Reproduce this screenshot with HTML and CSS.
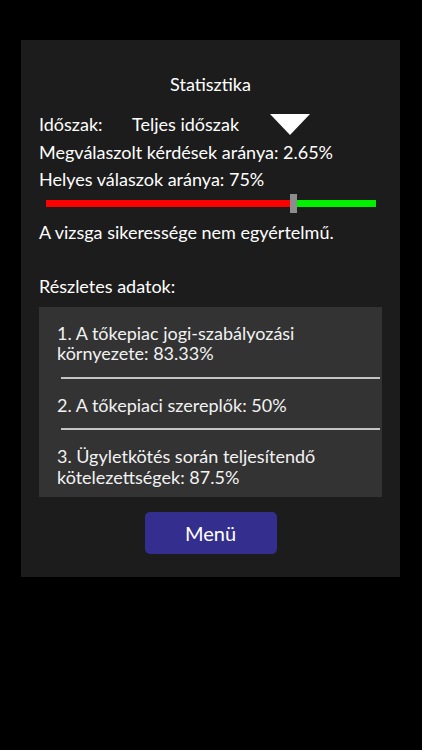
FILE: index.html
```html
<!DOCTYPE html>
<html lang="hu">
<head>
    <meta charset="UTF-8">
    <meta name="viewport" content="width=device-width, initial-scale=1.0">
    <title>Statisztika</title>
    <link rel="stylesheet" href="styles.css">
</head>
<body>
    <div class="panel">
        <h1 class="title">Statisztika</h1>

        <div class="line period">
            <span class="period-label">Időszak:</span>
            <span class="period-value">Teljes időszak</span>
            <svg class="period-arrow" width="40" height="21" viewBox="0 0 40 21">
                <polygon points="0,0 40,0 20,21" fill="#fff"/>
            </svg>
        </div>
        <div class="line">Megválaszolt kérdések aránya: 2.65%</div>
        <div class="line">Helyes válaszok aránya: 75%</div>

        <div class="meter">
            <div class="meter-track">
                <div class="meter-bad" style="width: 75%"></div>
                <div class="meter-good"></div>
                <div class="meter-thumb" style="left: 75%"></div>
            </div>
        </div>

        <div class="line verdict">A vizsga sikeressége nem egyértelmű.</div>

        <div class="line details-label">Részletes adatok:</div>

        <div class="details">
            <div class="row">1. A tőkepiac jogi-szabályozási környezete: 83.33%</div>
            <div class="sep"></div>
            <div class="row">2. A tőkepiaci szereplők: 50%</div>
            <div class="sep"></div>
            <div class="row">3. Ügyletkötés során teljesítendő kötelezettségek: 87.5%</div>
        </div>

        <div class="actions">
            <button class="menu-button">Menü</button>
        </div>
    </div>
</body>
</html>
```

FILE: styles.css
```css
body {
    margin: 0;
    background: #000;
    font-family: Lato, "Liberation Sans", Arial, sans-serif;
    color: #fff;
}
.panel {
    margin: 40px 0 0 21px;
    width: 379px;
    height: 537px;
    box-sizing: border-box;
    padding: 31px 18px 0 18px;
    background: #1c1c1c;
}
.title {
    margin: 0 0 13px 0;
    font-size: 18px;
    font-weight: normal;
    line-height: 27px;
    text-align: center;
}
.line {
    font-size: 18px;
    line-height: 27.5px;
    white-space: nowrap;
}
.period {
    display: flex;
    align-items: center;
}
.period-label {
    width: 93px;
}
.period-value {
    width: 138px;
}
.period-arrow {
    display: block;
}
.meter {
    height: 19px;
    margin: 0 6px 0 7px;
    display: flex;
    align-items: center;
}
.meter-track {
    position: relative;
    display: flex;
    width: 100%;
    height: 7px;
}
.meter-bad {
    background: #ff0000;
}
.meter-good {
    flex: 1;
    background: #00f000;
}
.meter-thumb {
    position: absolute;
    top: -6px;
    width: 7px;
    height: 19px;
    margin-left: -4px;
    background: #8c8c8c;
}
.verdict {
    margin-top: 6px;
}
.details-label {
    margin-top: 27px;
}
.details {
    margin-top: 6px;
    height: 190px;
    overflow: hidden;
    background: #333333;
}
.row {
    padding: 16px 20px 13px 18px;
    font-size: 18px;
    line-height: 20.5px;
    color: #f2f2f2;
}
.sep {
    height: 2px;
    margin: 0 2px 0 22px;
    background: #c4c4c4;
}
.actions {
    display: flex;
    justify-content: center;
    margin-top: 15px;
}
.menu-button {
    width: 132px;
    height: 42px;
    border: none;
    border-radius: 5px;
    background: #342f8e;
    color: #fff;
    font-family: Lato, "Liberation Sans", Arial, sans-serif;
    font-size: 20px;
}
```
